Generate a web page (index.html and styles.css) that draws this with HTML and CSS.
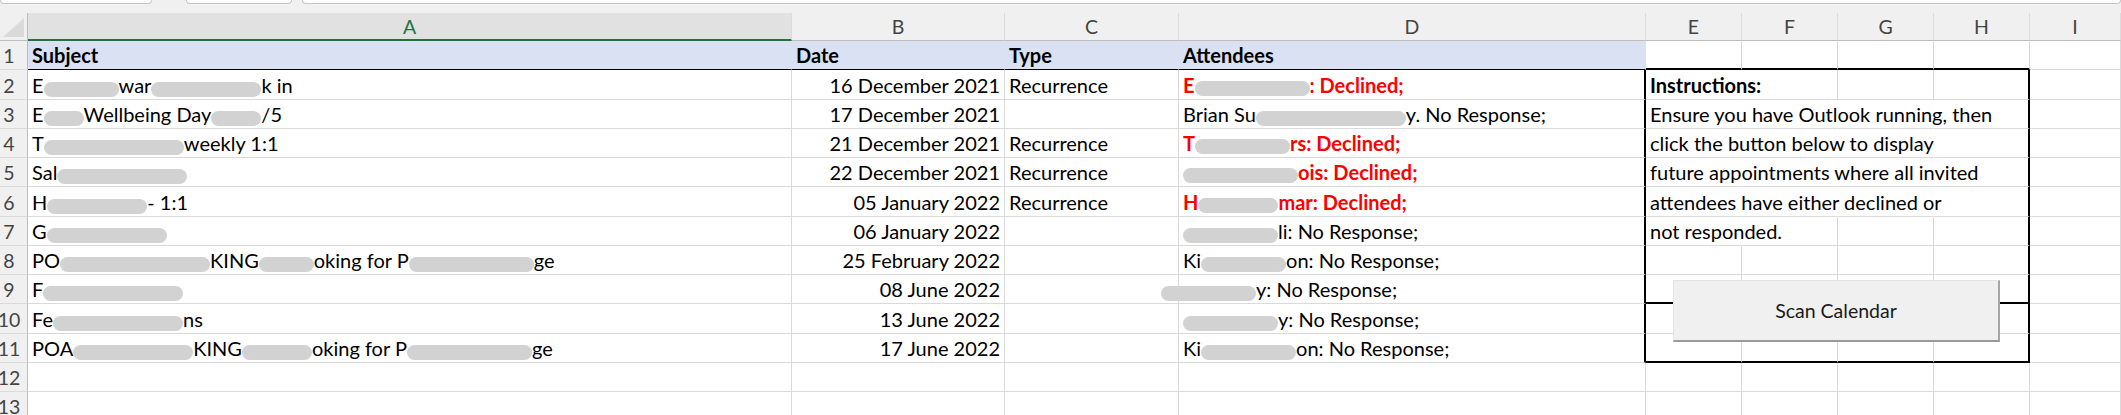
FILE: index.html
```html
<!DOCTYPE html>
<html lang="en">
<head>
  <meta charset="utf-8" />
  <title>Calendar scan</title>
  <link rel="stylesheet" href="styles.css">
</head>
<body>

  <div class="topbar">
    <div class="field namebox"></div>
    <div class="field fxbox"></div>
    <div class="field formula"></div>
  </div>

  <div class="sheet">
    <div class="row colheads">
      <div class="corner"></div>
      <div class="ch sel">A</div>
      <div class="ch">B</div>
      <div class="ch">C</div>
      <div class="ch">D</div>
      <div class="ch">E</div>
      <div class="ch">F</div>
      <div class="ch">G</div>
      <div class="ch">H</div>
      <div class="ch">I</div>
    </div>

    <div class="row">
      <div class="rh">1</div>
      <div class="c hd">Subject</div>
      <div class="c hd">Date</div>
      <div class="c hd">Type</div>
      <div class="c hd">Attendees</div>
      <div class="c bt"></div>
      <div class="c bt"></div>
      <div class="c bt"></div>
      <div class="c bt"></div>
      <div class="c"></div>
    </div>

    <div class="row">
      <div class="rh">2</div>
      <div class="c">E<span class="sm w75"></span>war<span class="sm w110"></span>k in</div>
      <div class="c num">16 December 2021</div>
      <div class="c">Recurrence</div>
      <div class="c bl"><span class="red">E<span class="sm w115"></span>: Declined;</span></div>
      <div class="c spill"><b>Instructions:</b></div>
      <div class="c"></div>
      <div class="c"></div>
      <div class="c br"></div>
      <div class="c"></div>
    </div>

    <div class="row">
      <div class="rh">3</div>
      <div class="c">E<span class="sm w40"></span> Wellbeing Day <span class="sm w50"></span>/5</div>
      <div class="c num">17 December 2021</div>
      <div class="c"></div>
      <div class="c bl">Brian Su<span class="sm w150"></span>y. No Response;</div>
      <div class="c spill">Ensure you have Outlook running, then</div>
      <div class="c spill"></div>
      <div class="c spill"></div>
      <div class="c br"></div>
      <div class="c"></div>
    </div>

    <div class="row">
      <div class="rh">4</div>
      <div class="c">T<span class="sm w140"></span>weekly 1:1</div>
      <div class="c num">21 December 2021</div>
      <div class="c">Recurrence</div>
      <div class="c bl"><span class="red">T<span class="sm w95"></span>rs: Declined;</span></div>
      <div class="c spill">click the button below to display</div>
      <div class="c spill"></div>
      <div class="c spill"></div>
      <div class="c br"></div>
      <div class="c"></div>
    </div>

    <div class="row">
      <div class="rh">5</div>
      <div class="c">Sal<span class="sm w130"></span></div>
      <div class="c num">22 December 2021</div>
      <div class="c">Recurrence</div>
      <div class="c bl"><span class="red"><span class="sm w115"></span>ois: Declined;</span></div>
      <div class="c spill">future appointments where all invited</div>
      <div class="c spill"></div>
      <div class="c spill"></div>
      <div class="c br"></div>
      <div class="c"></div>
    </div>

    <div class="row">
      <div class="rh">6</div>
      <div class="c">H<span class="sm w100"></span> - 1:1</div>
      <div class="c num">05 January 2022</div>
      <div class="c">Recurrence</div>
      <div class="c bl"><span class="red">H<span class="sm w80"></span>mar: Declined;</span></div>
      <div class="c spill">attendees have either declined or</div>
      <div class="c spill"></div>
      <div class="c spill"></div>
      <div class="c br"></div>
      <div class="c"></div>
    </div>

    <div class="row">
      <div class="rh">7</div>
      <div class="c">G<span class="sm w120"></span></div>
      <div class="c num">06 January 2022</div>
      <div class="c"></div>
      <div class="c bl"><span class="sm w95"></span>li: No Response;</div>
      <div class="c spill">not responded.</div>
      <div class="c"></div>
      <div class="c"></div>
      <div class="c br"></div>
      <div class="c"></div>
    </div>

    <div class="row">
      <div class="rh">8</div>
      <div class="c">PO<span class="sm w150"></span>KING<span class="sm w55"></span>oking for P<span class="sm w125"></span>ge</div>
      <div class="c num">25 February 2022</div>
      <div class="c"></div>
      <div class="c bl">Ki<span class="sm w85"></span>on: No Response;</div>
      <div class="c"></div>
      <div class="c"></div>
      <div class="c"></div>
      <div class="c br"></div>
      <div class="c"></div>
    </div>

    <div class="row">
      <div class="rh">9</div>
      <div class="c">F<span class="sm w140"></span></div>
      <div class="c num">08 June 2022</div>
      <div class="c"></div>
      <div class="c bl"><span class="sm w95 out"></span>y: No Response;</div>
      <div class="c bt anchor">
        <button class="scan">Scan Calendar</button>
      </div>
      <div class="c bt"></div>
      <div class="c bt"></div>
      <div class="c bt br"></div>
      <div class="c"></div>
    </div>

    <div class="row">
      <div class="rh">10</div>
      <div class="c">Fe<span class="sm w130"></span>ns</div>
      <div class="c num">13 June 2022</div>
      <div class="c"></div>
      <div class="c bl"><span class="sm w95"></span>y: No Response;</div>
      <div class="c"></div>
      <div class="c"></div>
      <div class="c"></div>
      <div class="c br"></div>
      <div class="c"></div>
    </div>

    <div class="row">
      <div class="rh">11</div>
      <div class="c">POA<span class="sm w120"></span>KING<span class="sm w70"></span>oking for P<span class="sm w125"></span>ge</div>
      <div class="c num">17 June 2022</div>
      <div class="c"></div>
      <div class="c bl">Ki<span class="sm w95"></span>on: No Response;</div>
      <div class="c bt"></div>
      <div class="c bt"></div>
      <div class="c bt"></div>
      <div class="c bt br"></div>
      <div class="c"></div>
    </div>

    <div class="row">
      <div class="rh">12</div>
      <div class="c"></div>
      <div class="c"></div>
      <div class="c"></div>
      <div class="c"></div>
      <div class="c"></div>
      <div class="c"></div>
      <div class="c"></div>
      <div class="c"></div>
      <div class="c"></div>
    </div>

    <div class="row">
      <div class="rh">13</div>
      <div class="c"></div>
      <div class="c"></div>
      <div class="c"></div>
      <div class="c"></div>
      <div class="c"></div>
      <div class="c"></div>
      <div class="c"></div>
      <div class="c"></div>
      <div class="c"></div>
    </div>
  </div>

</body>
</html>
```

FILE: styles.css
```css
body {
  margin: 0;
  background: #fff;
  font-family: Lato, "Open Sans", sans-serif;
  font-size: 20px;
  color: #000;
  overflow: hidden;
}

/* strip of the formula bar that is still visible */
.topbar {
  height: 13px;
  background: #f0f0f0;
  display: flex;
  align-items: flex-start;
}

.field {
  height: 3px;
  background: #fff;
  border: 1px solid #c6c6c6;
  border-top: none;
  border-radius: 0 0 4px 4px;
}

.namebox { width: 150px; }
.fxbox { width: 104px; margin-left: 34px; }
.formula { flex: 1; margin-left: 10px; }

.sheet {
  --cols: 28px 764px 213px 174px 467px 96px 96px 96px 96px 1fr;
}

.row {
  display: grid;
  grid-template-columns: var(--cols);
  height: 29.25px;
}

.colheads {
  height: 28px;
  background: #f0f0f0;
}

.corner {
  display: flex;
  justify-content: flex-end;
  align-items: flex-end;
  padding: 0 3px 3px 0;
  border-right: 1px solid #bdbdbd;
  border-bottom: 1px solid #bdbdbd;
}

.corner::after {
  content: "";
  border-left: 21px solid transparent;
  border-bottom: 19px solid #dadada;
}

.ch {
  display: flex;
  align-items: center;
  justify-content: center;
  font-size: 19.5px;
  color: #444;
  border-right: 1px solid #dcdcdc;
  border-bottom: 1px solid #bdbdbd;
}

.ch.sel {
  background: #e1e1e1;
  color: #217346;
  border-bottom: 2px solid #217346;
}

.rh {
  display: flex;
  align-items: flex-end;
  justify-content: center;
  padding: 0 9px 2px 0;
  font-size: 19.5px;
  background: #f0f0f0;
  color: #444;
  border-right: 1px solid #bdbdbd;
  border-bottom: 1px solid #dadada;
}

.c {
  display: flex;
  align-items: flex-end;
  padding: 0 4px 2px;
  white-space: nowrap;
  border-right: 1px solid #dadada;
  border-bottom: 1px solid #dadada;
}

.num { justify-content: flex-end; }

.hd {
  background: #d9e1f2;
  font-weight: 700;
  border-right-color: transparent;
  border-bottom-color: #000;
}

.spill { border-right-color: transparent; }

.bl { border-right: 2px solid #000; }
.br { border-right: 2px solid #000; }
.bt { border-bottom: 2px solid #000; }

.red {
  color: #ff0000;
  font-weight: 700;
}

/* scribbled-out names */
.sm {
  display: inline-block;
  height: 15px;
  vertical-align: -3px;
  border-radius: 8px;
  background: #d2d2d2;
}

.sm.out { margin-left: -22px; }

.w40 { width: 40px; }
.w50 { width: 50px; }
.w55 { width: 55px; }
.w70 { width: 70px; }
.w75 { width: 75px; }
.w80 { width: 80px; }
.w85 { width: 85px; }
.w95 { width: 95px; }
.w100 { width: 100px; }
.w110 { width: 110px; }
.w115 { width: 115px; }
.w120 { width: 120px; }
.w125 { width: 125px; }
.w130 { width: 130px; }
.w140 { width: 140px; }
.w150 { width: 150px; }

.anchor { position: relative; }

.scan {
  position: absolute;
  left: 27px;
  top: 5px;
  width: 327px;
  height: 62px;
  background: #f0f0f0;
  border: 1px solid #e4e4e4;
  border-right: 2px solid #a6a6a6;
  border-bottom: 2px solid #9a9a9a;
  font-family: Lato, "Open Sans", sans-serif;
  font-size: 19.5px;
  color: #1a1a1a;
}
```
